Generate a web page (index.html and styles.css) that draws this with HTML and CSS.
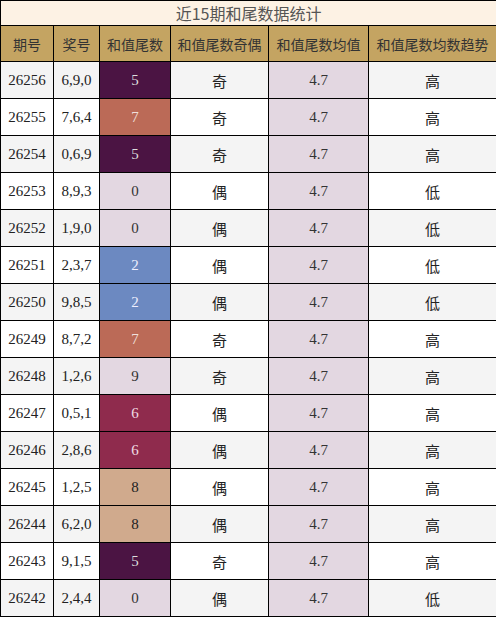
FILE: index.html
```html
<!DOCTYPE html>
<html>
<head>
  <meta charset="utf-8" />
  <title>和尾数据统计</title>
  <link rel="stylesheet" href="styles.css">
</head>
<body>
  <table class="stats">
    <colgroup>
      <col class="c-issue">
      <col class="c-nums">
      <col class="c-tail">
      <col class="c-odd">
      <col class="c-avg">
      <col class="c-trend">
    </colgroup>
    <thead>
      <tr class="title-row"><th colspan="6">近15期和尾数据统计</th></tr>
      <tr class="head-row">
        <th>期号</th>
        <th>奖号</th>
        <th>和值尾数</th>
        <th>和值尾数奇偶</th>
        <th>和值尾数均值</th>
        <th>和值尾数均数趋势</th>
      </tr>
    </thead>
    <tbody>
      <tr><td>26256</td><td>6,9,0</td><td class="tail t5">5</td><td class="cjk">奇</td><td class="avg">4.7</td><td class="cjk">高</td></tr>
      <tr><td>26255</td><td>7,6,4</td><td class="tail t7">7</td><td class="cjk">奇</td><td class="avg">4.7</td><td class="cjk">高</td></tr>
      <tr><td>26254</td><td>0,6,9</td><td class="tail t5">5</td><td class="cjk">奇</td><td class="avg">4.7</td><td class="cjk">高</td></tr>
      <tr><td>26253</td><td>8,9,3</td><td class="tail t0">0</td><td class="cjk">偶</td><td class="avg">4.7</td><td class="cjk">低</td></tr>
      <tr><td>26252</td><td>1,9,0</td><td class="tail t0">0</td><td class="cjk">偶</td><td class="avg">4.7</td><td class="cjk">低</td></tr>
      <tr><td>26251</td><td>2,3,7</td><td class="tail t2">2</td><td class="cjk">偶</td><td class="avg">4.7</td><td class="cjk">低</td></tr>
      <tr><td>26250</td><td>9,8,5</td><td class="tail t2">2</td><td class="cjk">偶</td><td class="avg">4.7</td><td class="cjk">低</td></tr>
      <tr><td>26249</td><td>8,7,2</td><td class="tail t7">7</td><td class="cjk">奇</td><td class="avg">4.7</td><td class="cjk">高</td></tr>
      <tr><td>26248</td><td>1,2,6</td><td class="tail t0">9</td><td class="cjk">奇</td><td class="avg">4.7</td><td class="cjk">高</td></tr>
      <tr><td>26247</td><td>0,5,1</td><td class="tail t6">6</td><td class="cjk">偶</td><td class="avg">4.7</td><td class="cjk">高</td></tr>
      <tr><td>26246</td><td>2,8,6</td><td class="tail t6">6</td><td class="cjk">偶</td><td class="avg">4.7</td><td class="cjk">高</td></tr>
      <tr><td>26245</td><td>1,2,5</td><td class="tail t8">8</td><td class="cjk">偶</td><td class="avg">4.7</td><td class="cjk">高</td></tr>
      <tr><td>26244</td><td>6,2,0</td><td class="tail t8">8</td><td class="cjk">偶</td><td class="avg">4.7</td><td class="cjk">高</td></tr>
      <tr><td>26243</td><td>9,1,5</td><td class="tail t5">5</td><td class="cjk">奇</td><td class="avg">4.7</td><td class="cjk">高</td></tr>
      <tr><td>26242</td><td>2,4,4</td><td class="tail t0">0</td><td class="cjk">偶</td><td class="avg">4.7</td><td class="cjk">低</td></tr>
    </tbody>
  </table>
</body>
</html>
```

FILE: styles.css
```css
html, body {
  margin: 0;
  padding: 0;
  background: #fff;
}

.stats {
  width: 496px;
  border-collapse: collapse;
  table-layout: fixed;
  font-family: "Liberation Serif", "Noto Sans CJK SC", serif;
  font-size: 15px;
  color: #222;
}

.c-issue { width: 53px; }
.c-nums { width: 46px; }
.c-tail { width: 71px; }
.c-odd { width: 98px; }
.c-avg { width: 100px; }
.c-trend { width: 128px; }

.stats th,
.stats td {
  border: 1px solid #000;
  padding: 0;
  text-align: center;
}

.title-row th {
  height: 24px;
  background: #fdf2e4;
  color: #555;
  font-family: "Noto Sans CJK SC", sans-serif;
  font-size: 16px;
  font-weight: normal;
}

.head-row th {
  height: 35px;
  background: #c4a462;
  color: #333;
  font-family: "Noto Sans CJK SC", sans-serif;
  font-size: 14px;
  font-weight: normal;
}

.stats tbody td {
  height: 36px;
}

.stats tbody tr:nth-child(odd) { background: #f4f4f4; }
.stats tbody tr:nth-child(even) { background: #fff; }

.stats .cjk {
  font-family: "Noto Sans CJK SC", sans-serif;
  font-size: 15px;
}

.stats .avg {
  background: #e3d7e1;
  color: #333;
}

.tail { color: #222; }
.tail.t5 { background: #4b1443; color: #ddd; }
.tail.t7 { background: #bb6a57; color: #f0e0dc; }
.tail.t2 { background: #6c89c1; color: #eef; }
.tail.t6 { background: #8f2b4d; color: #f0dde4; }
.tail.t8 { background: #d0aa8d; color: #222; }
.tail.t0 { background: #e3d7e1; color: #333; }
```
